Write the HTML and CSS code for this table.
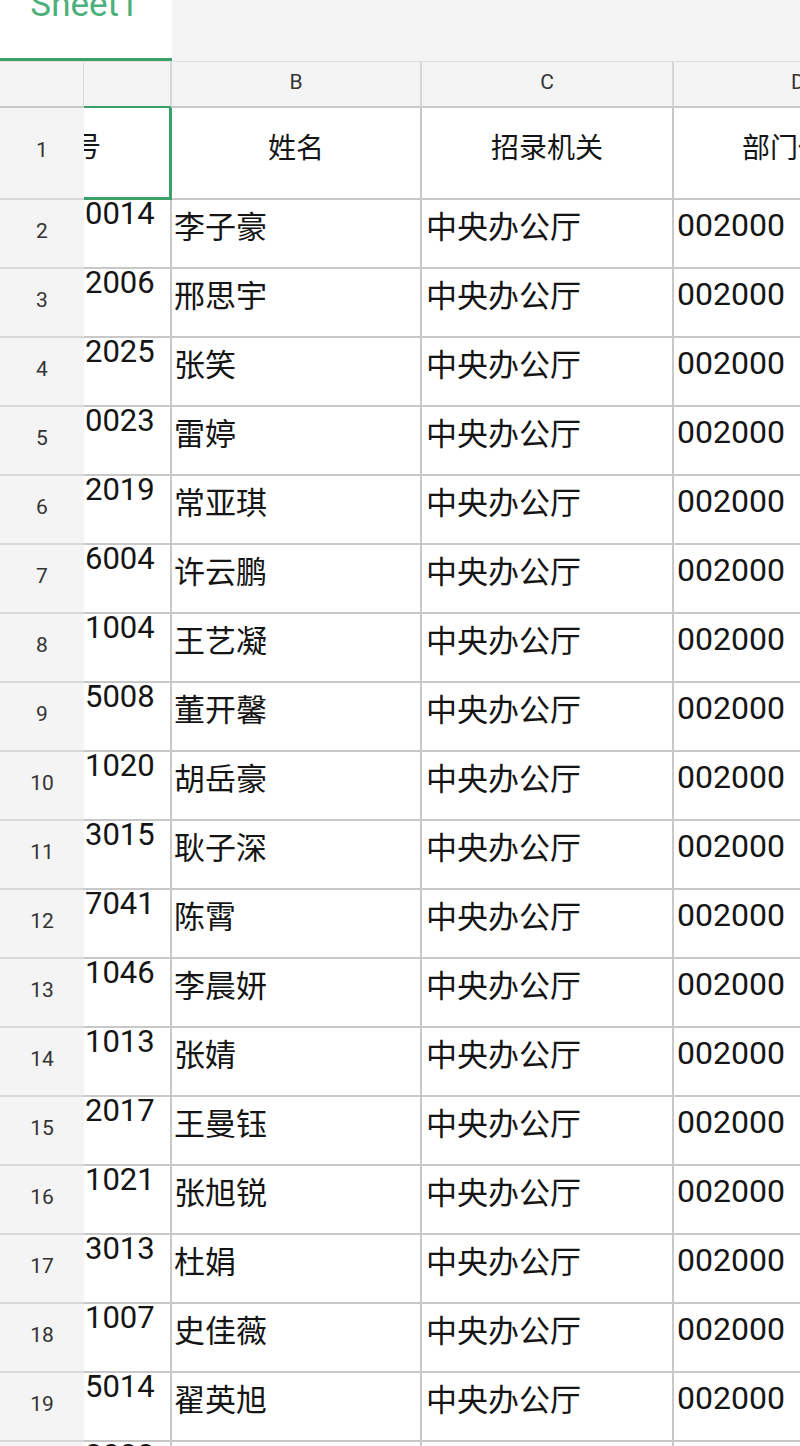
FILE: index.html
```html
<!DOCTYPE html>
<html lang="zh-CN">
<head>
<meta charset="utf-8">
<title>Sheet1</title>
<link rel="stylesheet" href="styles.css">
</head>
<body>
<div class="tabbar">
  <div class="tab"><span class="tab-label">Sheet1</span></div>
</div>
<div class="sheet">
  <div class="c h corner"></div>
  <div class="c h hsel"></div>
  <div class="c h">B</div>
  <div class="c h">C</div>
  <div class="c h">D</div>

  <div class="c n">1</div>
  <div class="c a sel"><span class="clip">号</span></div>
  <div class="c t">姓名</div>
  <div class="c t">招录机关</div>
  <div class="c t">部门代码</div>

  <div class="c n">2</div><div class="c a">0014</div><div class="c b">李子豪</div><div class="c d1">中央办公厅</div><div class="c d2">002000</div>
  <div class="c n">3</div><div class="c a">2006</div><div class="c b">邢思宇</div><div class="c d1">中央办公厅</div><div class="c d2">002000</div>
  <div class="c n">4</div><div class="c a">2025</div><div class="c b">张笑</div><div class="c d1">中央办公厅</div><div class="c d2">002000</div>
  <div class="c n">5</div><div class="c a">0023</div><div class="c b">雷婷</div><div class="c d1">中央办公厅</div><div class="c d2">002000</div>
  <div class="c n">6</div><div class="c a">2019</div><div class="c b">常亚琪</div><div class="c d1">中央办公厅</div><div class="c d2">002000</div>
  <div class="c n">7</div><div class="c a">6004</div><div class="c b">许云鹏</div><div class="c d1">中央办公厅</div><div class="c d2">002000</div>
  <div class="c n">8</div><div class="c a">1004</div><div class="c b">王艺凝</div><div class="c d1">中央办公厅</div><div class="c d2">002000</div>
  <div class="c n">9</div><div class="c a">5008</div><div class="c b">董开馨</div><div class="c d1">中央办公厅</div><div class="c d2">002000</div>
  <div class="c n">10</div><div class="c a">1020</div><div class="c b">胡岳豪</div><div class="c d1">中央办公厅</div><div class="c d2">002000</div>
  <div class="c n">11</div><div class="c a">3015</div><div class="c b">耿子深</div><div class="c d1">中央办公厅</div><div class="c d2">002000</div>
  <div class="c n">12</div><div class="c a">7041</div><div class="c b">陈霄</div><div class="c d1">中央办公厅</div><div class="c d2">002000</div>
  <div class="c n">13</div><div class="c a">1046</div><div class="c b">李晨妍</div><div class="c d1">中央办公厅</div><div class="c d2">002000</div>
  <div class="c n">14</div><div class="c a">1013</div><div class="c b">张婧</div><div class="c d1">中央办公厅</div><div class="c d2">002000</div>
  <div class="c n">15</div><div class="c a">2017</div><div class="c b">王曼钰</div><div class="c d1">中央办公厅</div><div class="c d2">002000</div>
  <div class="c n">16</div><div class="c a">1021</div><div class="c b">张旭锐</div><div class="c d1">中央办公厅</div><div class="c d2">002000</div>
  <div class="c n">17</div><div class="c a">3013</div><div class="c b">杜娟</div><div class="c d1">中央办公厅</div><div class="c d2">002000</div>
  <div class="c n">18</div><div class="c a">1007</div><div class="c b">史佳薇</div><div class="c d1">中央办公厅</div><div class="c d2">002000</div>
  <div class="c n">19</div><div class="c a">5014</div><div class="c b">翟英旭</div><div class="c d1">中央办公厅</div><div class="c d2">002000</div>
  <div class="c n">20</div><div class="c a">3033</div><div class="c b">王</div><div class="c d1">中央办公厅</div><div class="c d2">002000</div>
</div>
</body>
</html>
```
FILE: styles.css
```css
html, body {
  margin: 0;
  padding: 0;
}
body {
  width: 800px;
  height: 1446px;
  overflow: hidden;
  background: #ffffff;
  font-family: Roboto, "Noto Sans CJK SC", sans-serif;
  color: #151515;
}
.tabbar {
  height: 61px;
  background: #f4f4f4;
  border-bottom: 1px solid #dedede;
  display: flex;
}
.tab {
  width: 172px;
  height: 58px;
  background: #ffffff;
  border-bottom: 3px solid #3b9f68;
  display: flex;
  justify-content: center;
  align-items: flex-start;
  overflow: hidden;
}
.tab-label {
  font-size: 35px;
  line-height: 35px;
  color: #4cb07a;
  margin-top: -13px;
  padding-right: 3px;
}
.sheet {
  display: grid;
  grid-template-columns: 84px 88px 250px 252px 250px;
  grid-template-rows: 46px 92px repeat(19, 69px);
  width: 924px;
}
.c {
  box-sizing: border-box;
  border-right: 2px solid #c8c8c8;
  border-bottom: 2px solid #c8c8c8;
  overflow: hidden;
  white-space: nowrap;
  display: flex;
  align-items: center;
}
.h {
  background: #f4f4f4;
  border-right-color: #d6d6d6;
  border-bottom-color: #c8c8c8;
  justify-content: center;
  font-size: 21px;
  color: #333333;
  padding-bottom: 5px;
}
.corner {
  border-right: 1px solid #dadada;
}
.hsel {
  border-bottom-color: #3b9f68;
}
.n {
  background: #f4f4f4;
  border-right: none;
  border-bottom-color: #d8d8d8;
  justify-content: center;
  font-size: 21px;
  color: #333333;
  padding-bottom: 6px;
}
.a {
  align-items: flex-start;
  font-size: 31px;
  line-height: 27px;
  padding-left: 1px;
}
.sel {
  align-items: center;
  border-right: 3px solid #3b9f68;
  border-bottom: 3px solid #3b9f68;
  font-size: 28px;
  padding-bottom: 10px;
}
.clip {
  margin-left: -12px;
}
.t {
  justify-content: center;
  font-size: 28px;
  padding-bottom: 14px;
}
.b, .d1 {
  font-size: 31px;
  padding-bottom: 18px;
}
.d2 {
  font-size: 32px;
  padding-bottom: 18px;
}
.b {
  padding-left: 2px;
}
.d1 {
  padding-left: 4px;
}
.d2 {
  padding-left: 3px;
}
```
